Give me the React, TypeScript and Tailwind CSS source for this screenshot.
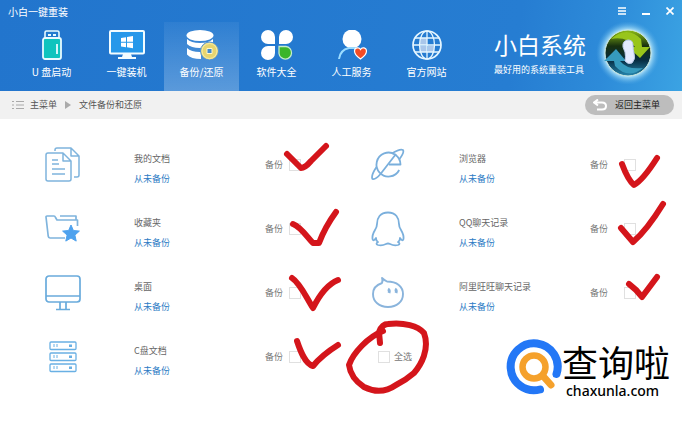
import type { ReactNode } from "react"

type BackupItem = {
  id: string
  title: string
  icon: ReactNode
  mark?: string
}

const navItems = [
  { label: "U 盘启动", icon: <UsbIcon /> },
  { label: "一键装机", icon: <MonitorIcon /> },
  { label: "备份/还原", icon: <DatabaseIcon />, active: true },
  { label: "软件大全", icon: <AppsIcon /> },
  { label: "人工服务", icon: <PersonIcon /> },
  { label: "官方网站", icon: <GlobeIcon /> },
]

const leftItems: BackupItem[] = [
  { id: "docs", title: "我的文档", icon: <DocsIcon />, mark: "M-2 -5 L12 9 Q16 9 22 2 L37 -13" },
  { id: "favorites", title: "收藏夹", icon: <FolderIcon />, mark: "M4 1 C12 4 18 14 24 20 L30 20 Q36 4 47 -11" },
  { id: "desktop", title: "桌面", icon: <DesktopIcon />, mark: "M3 -9 C11 -4 17 10 24 21 C31 7 39 -3 49 -7" },
  { id: "disk-c", title: "C盘文档", icon: <ServerIcon />, mark: "M8 -10 C11 -1 16 13 24 15 Q33 4 49 -6" },
]

const rightItems: BackupItem[] = [
  { id: "browser", title: "浏览器", icon: <BrowserIcon />, mark: "M-2 5 Q4 21 10 26 Q19 21 33 -1" },
  { id: "qq", title: "QQ聊天记录", icon: <QQIcon />, mark: "M-3 5 L9 19 Q23 7 39 -19" },
  { id: "wangwang", title: "阿里旺旺聊天记录", icon: <WangwangIcon />, mark: "M5 -3 Q12 2 18 10 L33 -10" },
]

const circleMark =
  "M2 -8 L1 -19 Q4 -27 10 -27 C26 -29 40 -25 46 -18 C52 -2 43 14 36 22 Q28 29 18 34 C8 41 -2 42 -14 36 C-23 30 -28 22 -29 14 C-25 2 -10 -14 5 -20"

function UsbIcon() {
  return (
    <svg width="20" height="30" viewBox="0 0 20 30" fill="none">
      <path d="M3 9V2.500Q3 1 4.500 1h11Q17 1 17 2.500V9" fill="#237bcf" stroke="#e8fbff" strokeWidth="1.600" />
      <path d="M6 4h3v2H6zM11 4h3v2h-3z" fill="#e8fbff" />
      <rect x="1" y="8" width="18" height="21" rx="2" fill="#0fc4be" stroke="#e8fbff" strokeWidth="1.800" />
      <path d="M15 14v10" stroke="#e8fbff" strokeWidth="1.800" />
    </svg>
  )
}

function MonitorIcon() {
  return (
    <svg width="36" height="30" viewBox="0 0 36 30" fill="none">
      <rect x="1" y="1" width="34" height="22.500" rx="1" fill="#2698ea" stroke="#f2fcff" strokeWidth="2" />
      <path d="M14 24h8l1 3h4v2H9v-2h4z" fill="#f2fcff" />
      <path d="M12 8l5-.8v4.500h-5zM18 7l6-1v5.700h-6zM12 12.700h5v4.500l-5-.8zM18 12.700h6v5.500l-6-1z" fill="#fff" />
    </svg>
  )
}

function DatabaseIcon() {
  return (
    <svg width="34" height="30" viewBox="0 0 34 30" fill="none">
      <ellipse cx="15" cy="5.500" rx="13.500" ry="5.500" fill="#fff" />
      <path d="M2 9q4 4 13 4t13-4v5q-4 4-13 4t-13-4zM2 18q4 4 13 4h1v7q-10 0-14-4.500z" fill="#fff" />
      <circle cx="24.500" cy="21" r="9" fill="#e7d56f" stroke="#4d91d9" strokeWidth="1" />
      <circle cx="24.500" cy="21" r="7.500" stroke="#f6edaa" />
      <path d="M22 18.500h5v5h-5z" fill="#438acb" stroke="#fff8cb" strokeWidth="1" />
    </svg>
  )
}

function AppsIcon() {
  return (
    <svg width="34" height="30" viewBox="0 0 34 30">
      <path d="M8 0a7 7 0 0 1 7 7v7H8A7 7 0 0 1 8 0zM26 0a7 7 0 0 1 0 14h-7V7a7 7 0 0 1 7-7zM8 16h7v7a7 7 0 1 1-7-7z" fill="#fff" />
      <path d="M19 16.500h7a6.300 6.300 0 1 1-7 7z" fill="#3bb52a" stroke="#c5edc9" strokeWidth="1.300" />
    </svg>
  )
}

function PersonIcon() {
  return (
    <svg width="30" height="30" viewBox="0 0 30 30" fill="none">
      <circle cx="15" cy="9" r="9.500" fill="#fff" />
      <path d="M2 29q1-9 10-11h7" stroke="#9bdcff" strokeWidth="2" />
      <path d="M23.500 29q-6-4-6-8a3.200 3.200 0 0 1 6-1.500 3.200 3.200 0 0 1 6 1.500q0 4-6 8z" fill="#f34c25" stroke="#fff" strokeWidth="1.200" />
    </svg>
  )
}

function GlobeIcon() {
  return (
    <svg width="32" height="30" viewBox="0 0 32 30" fill="none" stroke="#e5f6ff" strokeWidth="1.300">
      <path d="M9 8h7v7H9zM9 16h7v6H9zM17 16h6v6h-6z" fill="#a9c6ea" stroke="none" />
      <circle cx="16" cy="15" r="14" strokeWidth="1.700" />
      <ellipse cx="16" cy="15" rx="7.500" ry="14" />
      <path d="M16 1v28M2 15h28M4 8h24M4 22h24" />
    </svg>
  )
}

function DocsIcon() {
  return (
    <svg width="36" height="36" viewBox="0 0 36 36" fill="none" stroke="#7fb4dd" strokeWidth="1.500" strokeLinejoin="round">
      <path d="M10 4V3q0-2 2-2h14l8 8v19q0 2-2 2h-3M26 1v8h8" />
      <path d="M3 6h15l8 8v18q0 2-2 2H3q-2 0-2-2V8q0-2 2-2zM18 6v8h8M7 13h6M7 17h7M7 22h13M7 27h13" />
    </svg>
  )
}

function FolderIcon() {
  return (
    <svg width="36" height="30" viewBox="0 0 36 30" fill="none" stroke="#7fb4dd" strokeWidth="1.700" strokeLinejoin="round">
      <path d="M20 24H5q-1.500 0-1.800-2L1 3q0-1 1-1h7q1 0 1.500 1.500L12 6h20.500v6M15 2h16v4" />
      <path d="M26 11l2.400 5.500 6 .6-4.500 4 1.300 6-5.200-3.100-5.200 3.100 1.300-6-4.500-4 6-.6z" fill="#4ea2ee" stroke="#4ea2ee" strokeWidth="1" />
    </svg>
  )
}

function DesktopIcon() {
  return (
    <svg width="36" height="36" viewBox="0 0 36 36" fill="none" stroke="#69abdc" strokeWidth="1.700">
      <rect x="1" y="1" width="34" height="26" rx="3" />
      <path d="M1 21h34M15 27v7M21 27v7M11 34.500h14" />
    </svg>
  )
}

function ServerIcon() {
  return (
    <svg width="28" height="32" viewBox="0 0 28 32" fill="none" stroke="#69b0e4" strokeWidth="1.300">
      <rect x="1" y="1" width="26" height="7.500" rx="1" />
      <rect x="1" y="12" width="26" height="7.500" rx="1" />
      <rect x="1" y="23" width="26" height="7.500" rx="1" />
      <path d="M5 3v3M8 3v3M5 14v3M8 14v3M5 25v3M8 25v3" strokeWidth="1" />
      <path d="M20 4.700h3M20 15.700h3M20 26.700h3" strokeWidth="2.500" />
    </svg>
  )
}

function BrowserIcon() {
  return (
    <svg width="34" height="34" viewBox="0 0 34 34" fill="none" stroke="#7aafdc" strokeWidth="1.800" strokeLinejoin="round">
      <path d="M18 16.500h11.500a12 12 0 1 0-1.300 5.500" />
      <path d="M21 5.500Q29 .5 32 2q1.500 2.500-3.500 9M5.500 19Q-.5 28 1.500 31q3 1 8-5M9.500 26L25 6" />
    </svg>
  )
}

function QQIcon() {
  return (
    <svg width="34" height="36" viewBox="0 0 34 36" fill="none" stroke="#7aafdc" strokeWidth="1.800" strokeLinejoin="round">
      <path d="M17 1.500C9 1.500 6 7 6 13q0 3-2 6-3 5-2.500 9 1 3 3.500-1 0 3 2 4-3 2 0 3 4 1 8-1 2-1 4 0 4 2 8 1 3-1 0-3 2-1 2-4 2.500 4 3.500 1 .5-4-2.500-9-2-3-2-6c0-6-3-11.500-11-11.500z" />
    </svg>
  )
}

function WangwangIcon() {
  return (
    <svg width="34" height="34" viewBox="0 0 34 34" fill="none" stroke="#8ab4dc" strokeWidth="1.900" strokeLinejoin="round">
      <path d="M16 5.500Q13 4 11 2q1 2.500 0 5C5 9 2 13 2 18 2 25.500 8 31 17 31S32 25.500 32 18 26 5.500 16 5.500z" />
      <path d="M17 13q2 1 1 4M24 13q2 1 1 4" strokeWidth="2.800" />
    </svg>
  )
}

function BrandLogo() {
  return (
    <svg width="64" height="62" viewBox="0 0 64 62" fill="none">
      <defs>
        <radialGradient id="glow">
          <stop offset="70%" stopColor="#c4ecfb" />
          <stop offset="82%" stopColor="#8fd0f3" stopOpacity=".6" />
          <stop offset="100%" stopColor="#4aa3e2" stopOpacity="0" />
        </radialGradient>
        <linearGradient id="disc" x2="0" y2="1">
          <stop offset="0" stopColor="#8fbf16" />
          <stop offset=".35" stopColor="#17300f" />
          <stop offset=".65" stopColor="#062b40" />
          <stop offset="1" stopColor="#2786ae" />
        </linearGradient>
      </defs>
      <circle cx="32" cy="31" r="32" fill="url(#glow)" />
      <circle cx="32" cy="31" r="23" fill="url(#disc)" stroke="#cfe9df" strokeWidth="1" />
      <path d="M15 17Q31 3 45 17l1 8h8L44 36 32 25h7Q31 14 15 17z" fill="#98c51b" />
      <path d="M47 46Q32 58 19 44l-1-5H8l12-12 10 12h-6q7 9 23 7z" fill="#369abd" />
      <path d="M32 18q-6 1-5 7 1 3 2 5 1 5 0 9 3 4 7 2 4-4 2-10-1-3-1-8 0-5-5-5z" fill="#e4eaff" stroke="#bccbea" strokeWidth="1" />
    </svg>
  )
}

function Mark({ d }: { d: string }) {
  return (
    <svg
      className="pointer-events-none absolute top-0 left-0 size-3 overflow-visible"
      fill="none"
      stroke="#d4151b"
      strokeWidth="6"
      strokeLinecap="round"
      strokeLinejoin="round"
      aria-hidden="true"
    >
      <path d={d} />
    </svg>
  )
}

function CheckBox({ id, mark }: { id: string; mark?: string }) {
  return (
    <span className="relative block size-3">
      <input id={id} type="checkbox" className="block size-3 appearance-none border border-[#e0e0e0] bg-white" />
      {mark && <Mark d={mark} />}
    </span>
  )
}

function BackupRow({ item, wide }: { item: BackupItem; wide?: boolean }) {
  return (
    <li className="flex h-16 items-center">
      <div className="flex w-[70px] justify-center">{item.icon}</div>
      <div className="ml-9 flex-1 pt-2 leading-5">
        <p className="text-[#666]">{item.title}</p>
        <p className="text-[#2b7ac4]">从未备份</p>
      </div>
      <div className={wide ? "flex w-[88px] items-center gap-4" : "flex w-[88px] items-center gap-1.5"}>
        <label htmlFor={item.id} className="text-[#777]">备份</label>
        <CheckBox id={item.id} mark={item.mark} />
      </div>
    </li>
  )
}

export default function App() {
  return (
    <div className="relative min-h-screen bg-white font-['Noto_Sans_CJK_SC',sans-serif] text-[9px]">
      <header className="bg-[linear-gradient(100deg,#2275cd_0%,#267dd2_75%,#2d8bd9_88%,#3ba3e3_100%)] text-white">
        <div className="flex h-[22px] items-center justify-between pr-1.5 pl-2">
          <h1 className="text-[10px]">小白一键重装</h1>
          <div className="flex items-center gap-3">
            <button type="button" aria-label="菜单" className="flex size-3 items-center justify-center">
              <svg width="8" height="8" viewBox="0 0 8 8" stroke="#fff" strokeWidth="1.500">
                <path d="M0 1h8M0 4h8M0 7h8" />
              </svg>
            </button>
            <button type="button" aria-label="最小化" className="flex size-3 items-center justify-center">
              <svg width="8" height="8" viewBox="0 0 8 8" stroke="#fff" strokeWidth="2">
                <path d="M0 7h8" />
              </svg>
            </button>
            <button type="button" aria-label="关闭" className="flex size-3 items-center justify-center">
              <svg width="8" height="8" viewBox="0 0 8 8" stroke="#fff" strokeWidth="1.700">
                <path d="M.5.5l7 7M7.500.5l-7 7" />
              </svg>
            </button>
          </div>
        </div>
        <div className="flex h-[69px] items-stretch justify-between pr-[22px] pl-[14px]">
          <nav className="flex">
            {navItems.map((item) => (
              <a
                key={item.label}
                href="#"
                className={
                  item.active
                    ? "flex w-[75px] flex-col items-center gap-1 bg-linear-to-b from-white/5 to-white/25 pt-2 text-[10px] leading-4"
                    : "flex w-[75px] flex-col items-center gap-1 pt-2 text-[10px] leading-4"
                }
              >
                {item.icon}
                {item.label}
              </a>
            ))}
          </nav>
          <div className="flex items-start gap-2.5">
            <div className="pt-2">
              <p className="text-[23px] leading-7">小白系统</p>
              <p className="pt-1 leading-4">最好用的系统重装工具</p>
            </div>
            <BrandLogo />
          </div>
        </div>
      </header>

      <div className="flex h-7 items-center justify-between bg-[#f1f1f1] pr-2 pl-3">
        <div className="flex items-center text-[#555]">
          <svg width="12" height="10" viewBox="0 0 12 10" stroke="#aaa" strokeWidth="1">
            <path d="M0 1.500h2M4 1.500h8M0 5h2M4 5h8M0 8.500h2M4 8.500h8" />
          </svg>
          <a href="#" className="ml-1.5">主菜单</a>
          <svg width="6" height="8" viewBox="0 0 6 8" fill="#aaa" className="mx-2">
            <path d="M0 0l6 4-6 4z" />
          </svg>
          <span>文件备份和还原</span>
        </div>
        <button type="button" className="flex h-5 items-center gap-2 rounded-full bg-[#bdbdbd] px-2 text-[#222]">
          <svg width="14" height="12" viewBox="0 0 14 12" fill="none" stroke="#fff" strokeWidth="2">
            <path d="M5 .5L1 3.500l4 3M1 3.500h8q4 0 4 3.500t-4 3.500H4" />
          </svg>
          <span className="pr-1.5">返回主菜单</span>
        </button>
      </div>

      <main className="grid grid-cols-2 pt-3.5 pr-1 pl-7">
        <ul>
          {leftItems.map((item) => (
            <BackupRow key={item.id} item={item} />
          ))}
        </ul>
        <ul>
          {rightItems.map((item) => (
            <BackupRow key={item.id} item={item} wide />
          ))}
          <li className="flex h-16 items-center gap-1 pl-[25px]">
            <CheckBox id="select-all" mark={circleMark} />
            <label htmlFor="select-all" className="text-[#777]">全选</label>
          </li>
        </ul>
      </main>

      <div className="absolute right-3 bottom-6 flex items-center text-black">
        <svg width="56" height="56" viewBox="0 0 56 56" fill="none" strokeLinecap="round">
          <path d="M34 50.500A23.500 23.500 0 1 1 50.500 35" stroke="#2377f6" strokeWidth="8" />
          <circle cx="28" cy="28" r="11.500" stroke="#f5a12c" strokeWidth="6.500" />
          <path d="M37 37l8 9" stroke="#f5a12c" strokeWidth="7" />
        </svg>
        <div className="pt-1">
          <p className="text-4xl leading-11">查询啦</p>
          <p className="pl-1 font-['Noto_Sans',sans-serif] text-[14px] leading-4 font-medium">chaxunla.com</p>
        </div>
      </div>
    </div>
  )
}
